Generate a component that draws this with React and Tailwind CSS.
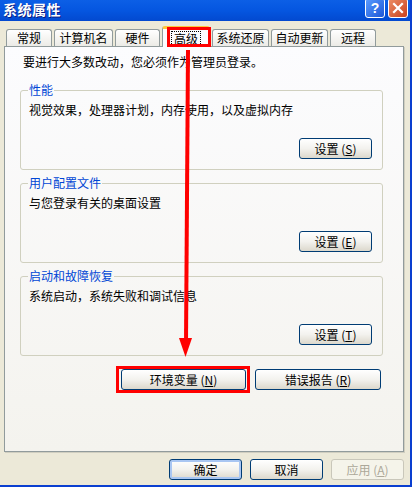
import React from 'react';

const tabs = [
  { name: '常规', w: 'w-[46px]' },
  { name: '计算机名', w: 'w-[59px]' },
  { name: '硬件', w: 'w-[45px]' },
  { name: '高级', w: 'w-[48px]', active: true },
  { name: '系统还原', w: 'w-[57px]' },
  { name: '自动更新', w: 'w-[57px]' },
  { name: '远程', w: 'w-[46px]' },
];

const groups = [
  { title: '性能', text: '视觉效果，处理器计划，内存使用，以及虚拟内存', key: 'S' },
  { title: '用户配置文件', text: '与您登录有关的桌面设置', key: 'E' },
  { title: '启动和故障恢复', text: '系统启动，系统失败和调试信息', key: 'T' },
];

const btnBase =
  'h-[21px] rounded-[3px] border flex items-center justify-center text-[12px] leading-none';
const btnNormal =
  'border-[#003C74] bg-gradient-to-b from-[#FFFFFF] via-[#F3F2EE] to-[#DCD8CC] text-black';
const btnDefault =
  'border-[#003C74] bg-gradient-to-b from-[#FFFFFF] via-[#F3F2EE] to-[#DCD8CC] text-black shadow-[inset_0_0_0_2px_#A9C6F2]';
const btnDisabled = 'border-[#C9C7BA] bg-[#F5F4EA] text-[#ACA899]';

const Btn = ({ className, children }) => (
  <div className={`${btnBase} ${className}`}>{children}</div>
);

export default function App() {
  return (
    <div className="relative w-[412px] h-[487px] overflow-hidden flex flex-col bg-[#ECE9D8] border-r-2 border-b-2 border-[#0A3FD0] font-['Noto_Sans_CJK_SC',sans-serif] text-[12px] leading-[14px] text-black">
      {/* title bar */}
      <div className="h-[21px] shrink-0 flex items-start justify-between bg-gradient-to-b from-[#0C5FE6] via-[#0556E0] to-[#0349D0] pl-[3px] pr-[2px]">
        <span className="text-white font-bold text-[14px] leading-[19px] tracking-[0.5px] [text-shadow:1px_1px_0_#0A1A80]">
          系统属性
        </span>
        <div className="flex gap-[3px] -mt-[2px]">
          <div className="w-[20px] h-[20px] rounded-[3px] border border-white bg-gradient-to-br from-[#5A9BFF] to-[#1E56D6] flex items-center justify-center text-white font-bold text-[14px] font-['Liberation_Sans',sans-serif]">
            ?
          </div>
          <div className="w-[20px] h-[20px] rounded-[3px] border border-white bg-gradient-to-br from-[#EC8C64] to-[#C8401C] flex items-center justify-center">
            <svg width="12" height="12" viewBox="0 0 12 12">
              <path d="M2 2 L10 10 M10 2 L2 10" stroke="white" strokeWidth="2.2" strokeLinecap="square" />
            </svg>
          </div>
        </div>
      </div>

      {/* tabs */}
      <div className="mt-[5px] h-[20px] flex items-end gap-[2px] pl-[6px] relative z-10">
        {tabs.map((t) =>
          t.active ? (
            <div
              key={t.name}
              className={`${t.w} h-[21px] -mb-[1px] bg-[#FCFCFE] border border-b-0 border-[#919B9C] border-t-[3px] border-t-[#FFC83C] rounded-t-[3px] flex items-center justify-center`}
            >
              <span className="border border-dotted border-black px-[2px] leading-[13px]">{t.name}</span>
            </div>
          ) : (
            <div
              key={t.name}
              className={`${t.w} h-[17px] bg-gradient-to-b from-[#FFFFFF] to-[#ECEBE6] border border-b-0 border-[#919B9C] rounded-t-[3px] flex items-center justify-center`}
            >
              {t.name}
            </div>
          )
        )}
      </div>

      {/* panel */}
      <div className="ml-[4px] w-[400px] h-[406px] border border-[#919B9C] bg-gradient-to-b from-[#FCFCFE] to-[#F4F3EE] shadow-[1px_1px_0_#D0CEC0] pt-[8px] flex flex-col">
        <div className="pl-[18px]">要进行大多数改动，您必须作为管理员登录。</div>

        <div className="mt-[14px] ml-[15px] w-[363px] flex flex-col gap-[6px]">
          {groups.map((g) => (
            <fieldset
              key={g.title}
              className="border border-[#D0D0BF] rounded-[3px] px-[8px] pb-[10px]"
            >
              <legend className="ml-[-1px] px-[1px] text-[#0046D5] leading-[14px]">{g.title}</legend>
              <div className="mt-[6px]">{g.text}</div>
              <div className="mt-[21px] flex justify-end pr-[2px]">
                <Btn className={`w-[73px] ${btnNormal}`}>
                  设置 (<span className="underline">{g.key}</span>)
                </Btn>
              </div>
            </fieldset>
          ))}
        </div>

        <div className="mt-[13px] flex justify-end gap-[9px] pr-[22px]">
          <Btn className={`w-[125px] ${btnNormal}`}>
            环境变量 (<span className="underline">N</span>)
          </Btn>
          <Btn className={`w-[126px] ${btnNormal}`}>
            错误报告 (<span className="underline">R</span>)
          </Btn>
        </div>
      </div>

      {/* dialog buttons */}
      <div className="mt-[7px] flex justify-end gap-[8px] pr-[6px]">
        <Btn className={`w-[73px] ${btnDefault}`}>确定</Btn>
        <Btn className={`w-[73px] ${btnNormal}`}>取消</Btn>
        <Btn className={`w-[73px] ${btnDisabled}`}>
          应用 (<span className="underline">A</span>)
        </Btn>
      </div>

      {/* red annotations */}
      <div className="absolute left-[167px] top-[27px] w-[44px] h-[20px] border-[3px] border-[#FF0000] z-20 pointer-events-none" />
      <div className="absolute left-[116px] top-[366px] w-[134px] h-[27px] border-[3px] border-[#FF0000] z-20 pointer-events-none" />
      <svg className="absolute inset-0 z-20 pointer-events-none" width="412" height="487">
        <line x1="188" y1="50" x2="186" y2="342" stroke="#FF0000" strokeWidth="4" />
        <polygon points="179,338 192,338 185.5,357" fill="#FF0000" />
      </svg>
    </div>
  );
}
